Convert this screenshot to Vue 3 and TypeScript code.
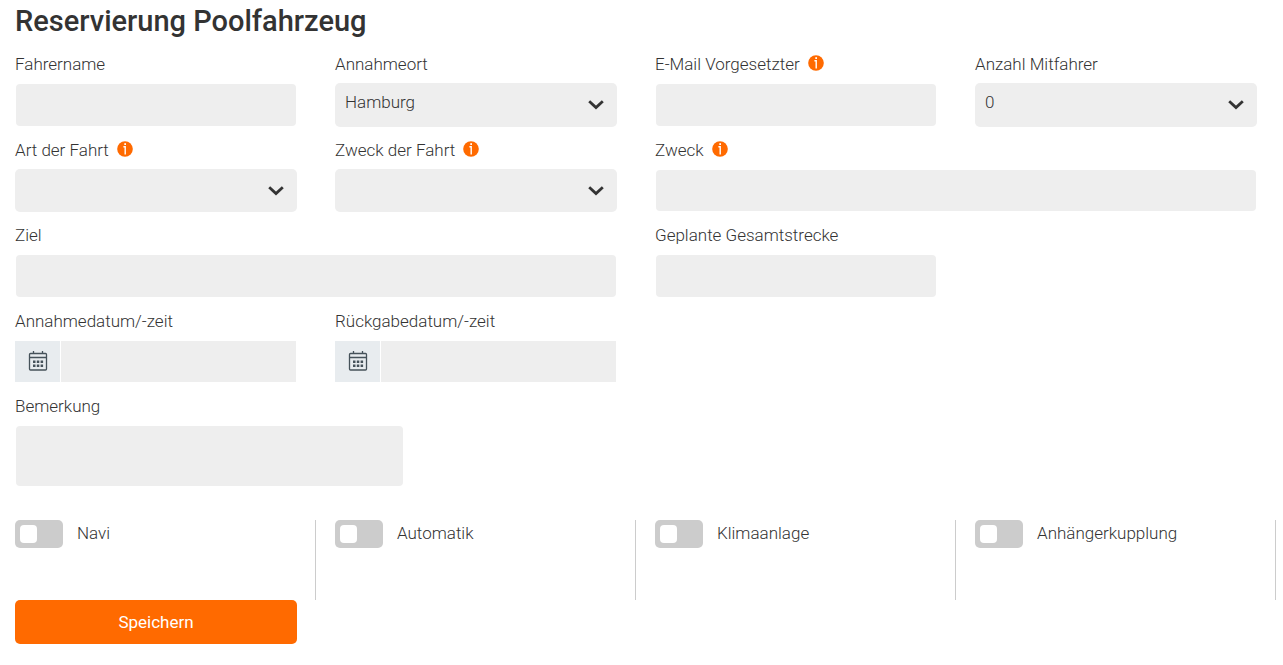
<script setup lang="ts">
import { reactive } from 'vue'

type FieldKind = 'text' | 'select' | 'date' | 'textarea'

interface Field {
  id: string
  label: string
  kind: FieldKind
  info?: boolean
  wide?: boolean
  first?: boolean
  options?: string[]
}

const fields: Field[] = [
  { id: 'fahrername', label: 'Fahrername', kind: 'text' },
  { id: 'annahmeort', label: 'Annahmeort', kind: 'select', options: ['Hamburg'] },
  { id: 'email', label: 'E-Mail Vorgesetzter', kind: 'text', info: true },
  { id: 'mitfahrer', label: 'Anzahl Mitfahrer', kind: 'select', options: ['0', '1', '2', '3', '4'] },
  { id: 'art', label: 'Art der Fahrt', kind: 'select', info: true, options: [''] },
  { id: 'zweckart', label: 'Zweck der Fahrt', kind: 'select', info: true, options: [''] },
  { id: 'zweck', label: 'Zweck', kind: 'text', info: true, wide: true },
  { id: 'ziel', label: 'Ziel', kind: 'text', wide: true },
  { id: 'strecke', label: 'Geplante Gesamtstrecke', kind: 'text' },
  { id: 'annahme', label: 'Annahmedatum/-zeit', kind: 'date', first: true },
  { id: 'rueckgabe', label: 'Rückgabedatum/-zeit', kind: 'date' },
  { id: 'bemerkung', label: 'Bemerkung', kind: 'textarea', wide: true, first: true },
]

const values = reactive<Record<string, string>>({
  fahrername: '',
  annahmeort: 'Hamburg',
  email: '',
  mitfahrer: '0',
  art: '',
  zweckart: '',
  zweck: '',
  ziel: '',
  strecke: '',
  annahme: '',
  rueckgabe: '',
  bemerkung: '',
})

const extras = reactive([
  { id: 'navi', label: 'Navi', on: false },
  { id: 'automatik', label: 'Automatik', on: false },
  { id: 'klima', label: 'Klimaanlage', on: false },
  { id: 'kupplung', label: 'Anhängerkupplung', on: false },
])
</script>

<template>
  <form class="page" @submit.prevent>
    <h1>Reservierung Poolfahrzeug</h1>

    <div class="fields">
      <div
        v-for="f in fields"
        :key="f.id"
        class="field"
        :class="{ wide: f.wide, first: f.first }"
      >
        <div class="caption">
          <label :for="f.id">{{ f.label }}</label>
          <svg v-if="f.info" class="info" viewBox="0 0 16 16" aria-hidden="true">
            <circle cx="8" cy="8" r="7.8" fill="#ff6a00" />
            <rect x="7.3" y="2.2" width="1.7" height="1.8" fill="#fff" />
            <path d="M6.4 5.8H8.2V13.6" fill="none" stroke="#fff" stroke-width="1.4" />
          </svg>
        </div>

        <input v-if="f.kind === 'text'" :id="f.id" v-model="values[f.id]" class="box" type="text" />

        <div v-else-if="f.kind === 'select'" class="select">
          <select :id="f.id" v-model="values[f.id]">
            <option v-for="o in f.options" :key="o" :value="o">{{ o }}</option>
          </select>
          <svg class="chevron" viewBox="0 0 16 10" aria-hidden="true">
            <path d="M1.2 1.2L8 7.6L14.8 1.2" fill="none" stroke="#333" stroke-width="2.8" />
          </svg>
        </div>

        <div v-else-if="f.kind === 'date'" class="date">
          <button class="pick" type="button" :aria-label="f.label">
            <svg viewBox="0 0 20 22" aria-hidden="true">
              <g fill="none" stroke="#46525a" stroke-width="1.3">
                <rect x="1.5" y="3.5" width="17" height="16.5" rx="1" />
                <path d="M1.5 7.5H18.5M5.5 1V3.5M14.5 1V3.5" />
              </g>
              <g fill="#46525a">
                <rect x="5" y="10.5" width="2.5" height="2.5" />
                <rect x="8.8" y="10.5" width="2.5" height="2.5" />
                <rect x="12.6" y="10.5" width="2.5" height="2.5" />
                <rect x="5" y="14.5" width="2.5" height="2.5" />
                <rect x="8.8" y="14.5" width="2.5" height="2.5" />
                <rect x="12.6" y="14.5" width="2.5" height="2.5" />
              </g>
            </svg>
          </button>
          <input :id="f.id" v-model="values[f.id]" type="text" />
        </div>

        <textarea v-else :id="f.id" v-model="values[f.id]" class="box note"></textarea>
      </div>
    </div>

    <div class="extras">
      <div v-for="e in extras" :key="e.id" class="extra">
        <input :id="e.id" v-model="e.on" class="toggle" type="checkbox" role="switch" />
        <label :for="e.id">{{ e.label }}</label>
      </div>
    </div>

    <div class="actions">
      <button class="save" type="submit">Speichern</button>
    </div>
  </form>
</template>

<style>
body {
  margin: 0;
  background: #fff;
}
</style>

<style scoped>
.page,
.page input,
.page select,
.page textarea,
.page button {
  font-family: Roboto, 'Liberation Sans', sans-serif;
  font-size: 17px;
  font-weight: 300;
  color: #333;
}

.page * {
  box-sizing: border-box;
}

h1 {
  margin: 0;
  padding: 3px 15px 0;
  font-size: 29px;
  font-weight: 500;
  line-height: 36px;
}

.fields {
  display: grid;
  grid-template-columns: repeat(4, minmax(0, 1fr));
  grid-template-rows: minmax(74px, auto) minmax(73px, auto) minmax(74px, auto) minmax(73px, auto) auto;
  gap: 12px 38px;
  padding: 14px 26px 0 15px;
}

.field {
  display: flex;
  flex-direction: column;
  min-width: 0;
}

.wide {
  grid-column-end: span 2;
}

.first {
  grid-column-start: 1;
}

.caption {
  display: flex;
  align-items: center;
  gap: 8px;
  height: 22px;
  margin-bottom: 8px;
}

.info {
  width: 16px;
  height: 16px;
  margin-bottom: 2px;
}

.box,
select {
  flex: 1;
  width: 100%;
  margin: 0;
  padding: 0 10px;
  border: 1px solid transparent;
  border-radius: 5px;
  background: #eee;
  background-clip: padding-box;
  outline-color: #ff6a00;
}

.note {
  flex: none;
  width: 389px;
  max-width: 100%;
  height: 62px;
  padding: 8px 10px;
  resize: none;
}

.select {
  position: relative;
  display: flex;
  flex: 1;
}

select {
  appearance: none;
  padding: 0 36px 6px 10px;
  border: 0;
}

.chevron {
  position: absolute;
  top: 17px;
  right: 13px;
  width: 16px;
  height: 10px;
  pointer-events: none;
}

.date {
  display: flex;
  flex: 1;
  gap: 1px;
  padding: 1px 1px 1px 0;
}

.pick {
  display: flex;
  align-items: center;
  justify-content: center;
  width: 45px;
  padding: 0 0 2px;
  border: 0;
  background: #e8ecef;
}

.pick svg {
  width: 20px;
  height: 22px;
}

.date input {
  flex: 1;
  min-width: 0;
  padding: 0 10px;
  border: 0;
  background: #eee;
  outline-color: #ff6a00;
}

.extras {
  display: grid;
  grid-template-columns: repeat(4, minmax(0, 1fr));
  gap: 19px;
  padding: 33px 7px 0 15px;
}

.extra {
  display: flex;
  align-items: flex-start;
  gap: 14px;
  min-height: 80px;
  border-right: 1px solid #ccc;
}

.extra label {
  line-height: 26px;
}

.toggle {
  appearance: none;
  display: flex;
  flex: none;
  width: 48px;
  height: 28px;
  margin: 0;
  padding: 5px;
  border-radius: 5px;
  background: #ccc;
}

.toggle::before {
  content: '';
  width: 17px;
  height: 18px;
  border-radius: 4px;
  background: #fff;
}

.toggle:checked {
  justify-content: flex-end;
  background: #ff6a00;
}

.actions {
  display: grid;
  grid-template-columns: repeat(4, minmax(0, 1fr));
  gap: 38px;
  padding: 0 26px 21px 15px;
}

.page .save {
  min-height: 44px;
  padding: 0 16px;
  border: 0;
  border-radius: 5px;
  background: #ff6a00;
  color: #fff;
  font-weight: 400;
}
</style>
